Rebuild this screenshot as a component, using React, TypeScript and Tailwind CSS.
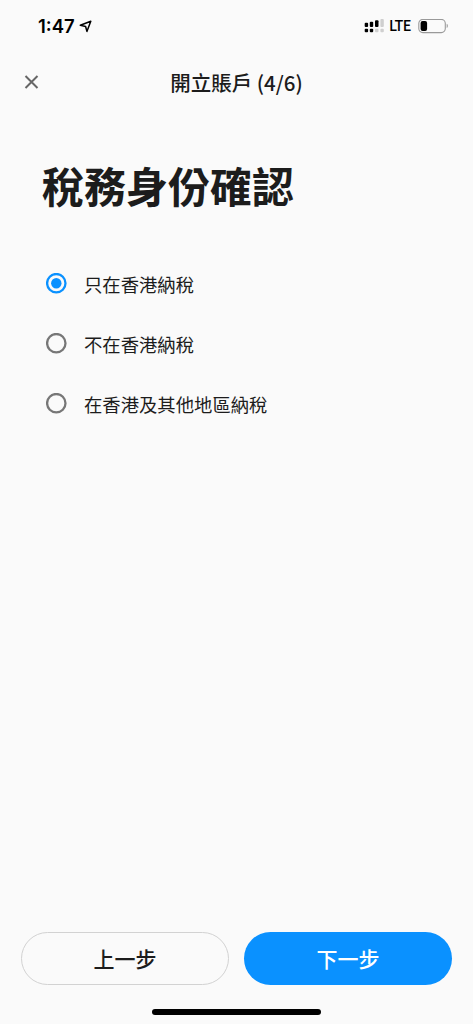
import { useState } from "react";

const options = [
  { id: "hk-only", label: "只在香港納稅" },
  { id: "not-hk", label: "不在香港納稅" },
  { id: "hk-and-others", label: "在香港及其他地區納稅" },
];

const StatusBar = () => {
  return (
    <div className="flex h-[52px] items-center justify-between pl-[38px] pr-[24px] text-black">
      <div className="flex items-center gap-[4px]">
        <span className="pt-px font-['Inter',sans-serif] text-[18.5px] font-semibold leading-none">1:47</span>
        <svg width="13" height="13" viewBox="0 0 13 13" fill="none" stroke="currentColor" strokeWidth="1.5" strokeLinejoin="round">
          <path d="M11.8 1.2 7.9 11.4 6.6 6.5 1.3 5.3Z" />
        </svg>
      </div>

      <div className="flex items-center">
        {/* Dual SIM signal */}
        <svg width="20" height="15" viewBox="0 0 20 15" className="mr-[5px]">
          <rect x="0.7" y="3.7" width="3.4" height="4.3" rx="1" />
          <rect x="5.8" y="2.8" width="3.4" height="5.2" rx="1" />
          <rect x="11" y="1.2" width="3.5" height="6.8" rx="1" />
          <rect x="16.4" y="0" width="3.4" height="8" rx="1" fill="#cfcfcf" />
          <rect x="0.7" y="9.8" width="3.4" height="3.5" rx="1" />
          <rect x="5.8" y="9.8" width="3.4" height="3.5" rx="1" />
          <rect x="11" y="9.8" width="3.5" height="3.5" rx="1" fill="#cfcfcf" />
          <rect x="16.4" y="9.8" width="3.4" height="3.5" rx="1" fill="#cfcfcf" />
        </svg>
        <span className="w-[29px] pb-px font-['Noto_Sans_CJK_TC',sans-serif] text-[14.5px] font-medium leading-none tracking-[-0.6px]">
          LTE
        </span>
        <svg width="31" height="15" viewBox="0 0 31 15">
          <rect x="0.8" y="0.4" width="26.5" height="13.2" rx="4" fill="none" stroke="#999" strokeWidth="1.1" />
          <rect x="2.6" y="2.1" width="6.5" height="9.8" rx="2" />
          <path d="M28.7 4.8c1.6.6 1.6 3.6 0 4.3Z" fill="#999" />
        </svg>
      </div>
    </div>
  );
};

const Radio = ({ checked }: { checked: boolean }) => {
  return (
    <svg width="21" height="21" viewBox="0 0 21 21" fill="none" className={checked ? "text-[#0a91ff]" : "text-[#777]"}>
      <circle cx="10.3" cy="10.2" r="9.2" stroke="currentColor" strokeWidth="2.3" />
      {checked && <circle cx="10.3" cy="10.2" r="5.2" fill="currentColor" />}
    </svg>
  );
};

const App = () => {
  const [selected, setSelected] = useState("hk-only");

  return (
    <div className="flex h-screen w-full flex-col bg-[#fafafa] font-['Noto_Sans_CJK_TC',sans-serif] text-[#1c1c1c]">
      <StatusBar />

      <header className="grid h-[61px] grid-cols-[64px_1fr_64px] items-center">
        <button aria-label="關閉" className="flex pl-[24px]">
          <svg width="15" height="15" viewBox="0 0 15 15" fill="none" stroke="#666" strokeWidth="2">
            <path d="m1.5 1 12 12m0-12-12 12" />
          </svg>
        </button>
        <h2 className="text-center text-[20.5px] font-medium leading-none">開立賬戶 (4/6)</h2>
      </header>

      <main className="flex-1 px-[42px] pt-[42px]">
        <h1 className="text-[42px] font-bold leading-[60px]">稅務身份確認</h1>

        <div className="mt-[38px] flex flex-col" role="radiogroup">
          {options.map((option) => (
            <button
              key={option.id}
              role="radio"
              aria-checked={selected === option.id}
              className="flex h-[60px] items-center gap-[17px] pl-[4px]"
              onClick={() => setSelected(option.id)}
            >
              <Radio checked={selected === option.id} />
              <span className="pt-[2px] text-[18.35px] leading-none">{option.label}</span>
            </button>
          ))}
        </div>
      </main>

      {/* Bottom actions */}
      <footer className="flex flex-col items-center">
        <div className="grid w-full grid-cols-2 gap-[15px] px-[21px]">
          <button className="h-[53px] rounded-full border border-[#d2d2d2] text-[21px] font-medium leading-none">
            上一步
          </button>
          <button className="h-[53px] rounded-full bg-[#0a91ff] text-[21px] font-medium leading-none text-white">
            下一步
          </button>
        </div>
        <div className="mb-[9px] mt-[24px] h-[6px] w-[169px] rounded-full bg-black" />
      </footer>
    </div>
  );
};

export default App;
